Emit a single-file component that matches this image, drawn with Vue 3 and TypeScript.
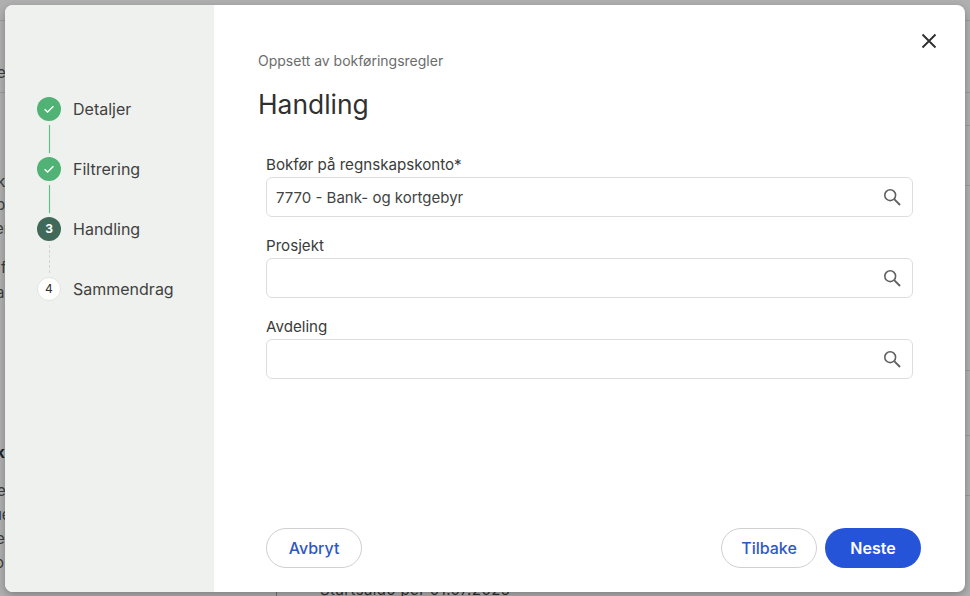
<script setup lang="ts">
interface Step {
  label: string
  state: 'done' | 'active' | 'todo'
  num: number
}
const steps: Step[] = [
  { label: 'Detaljer', state: 'done', num: 1 },
  { label: 'Filtrering', state: 'done', num: 2 },
  { label: 'Handling', state: 'active', num: 3 },
  { label: 'Sammendrag', state: 'todo', num: 4 },
]
const fields = [
  { label: 'Bokfør på regnskapskonto*', value: '7770 - Bank- og kortgebyr' },
  { label: 'Prosjekt', value: '' },
  { label: 'Avdeling', value: '' },
]
const backdropText = [
  { text: 'e', top: 64, left: -3 },
  { text: 'k', top: 173, left: -3 },
  { text: 'b', top: 196, left: -4 },
  { text: 'er', top: 220, left: -5 },
  { text: 'f', top: 259, left: 1 },
  { text: 'a', top: 284, left: -4 },
  { text: 'e', top: 482, left: -3 },
  { text: 'ue', top: 506, left: -7 },
  { text: 'es', top: 530, left: -4 },
  { text: 'o', top: 554, left: -5 },
]
const backdropLines = [
  { y: 20, left: 0 },
  { y: 92, left: 0 },
  { y: 125, left: 900 },
  { y: 185, left: 900 },
  { y: 370, left: 900 },
  { y: 435, left: 900 },
  { y: 495, left: 900 },
]
</script>

<template>
  <div class="screen">
    <div class="backdrop">
      <span v-for="(t, i) in backdropText" :key="i" class="bg-text" :style="{ top: t.top + 'px', left: t.left + 'px' }">{{ t.text }}</span>
      <span class="bg-text bg-bold">k</span>
      <span class="bg-text bg-foot">Startsaldo per 01.07.2025</span>
      <i v-for="l in backdropLines" :key="l.y" class="bg-line" :style="{ top: l.y + 'px', left: l.left + 'px' }"></i>
      <i class="bg-vline"></i>
    </div>

    <div class="modal">
      <aside class="side">
        <div v-for="(s, i) in steps" :key="s.label" class="step">
          <div class="marker">
            <span class="dot" :class="s.state">
              <svg v-if="s.state === 'done'" width="12" height="12" viewBox="0 0 12 12" fill="none">
                <path d="M1.6 6.2 4.6 9.1 10.4 3.2" stroke="#fff" stroke-width="1.4" />
              </svg>
              <template v-else>{{ s.num }}</template>
            </span>
            <span v-if="i < steps.length - 1" class="connector" :class="s.state === 'done' ? 'solid' : 'dashed'"></span>
          </div>
          <span class="step-label">{{ s.label }}</span>
        </div>
      </aside>

      <main class="main">
        <button class="close" type="button" aria-label="Lukk">
          <svg width="16" height="16" viewBox="0 0 16 16" fill="none">
            <path d="M1.5 1.5 14.5 14.5M14.5 1.5 1.5 14.5" stroke="#2f2f2f" stroke-width="1.9" />
          </svg>
        </button>
        <p class="eyebrow">Oppsett av bokføringsregler</p>
        <h1 class="title">Handling</h1>

        <div class="form">
          <div v-for="f in fields" :key="f.label" class="field">
            <label class="label">{{ f.label }}</label>
            <div class="input">
              <span class="value">{{ f.value }}</span>
              <svg width="18" height="18" viewBox="0 0 18 18" fill="none">
                <circle cx="7.2" cy="7.2" r="5.4" stroke="#5f6160" stroke-width="1.6" />
                <path d="M11.2 11.2 17 17" stroke="#5f6160" stroke-width="1.9" />
              </svg>
            </div>
          </div>
        </div>

        <div class="actions">
          <button class="btn ghost" type="button">Avbryt</button>
          <div class="actions-right">
            <button class="btn ghost" type="button">Tilbake</button>
            <button class="btn primary" type="button">Neste</button>
          </div>
        </div>
      </main>
    </div>
  </div>
</template>

<style>
html,
body {
  margin: 0;
  padding: 0;
}
</style>

<style scoped>
.screen {
  position: relative;
  width: 970px;
  height: 596px;
  overflow: hidden;
  box-sizing: border-box;
  padding: 5px;
  background: #ababab;
  font-family: Inter, "Noto Sans", sans-serif;
}
.backdrop {
  position: absolute;
  inset: 0;
  overflow: hidden;
  background: #b0b0b0;
}
.bg-text {
  position: absolute;
  font-size: 15px;
  line-height: 18px;
  color: #3a3d3d;
}
.bg-bold {
  top: 444px;
  left: -4px;
  font-weight: 700;
  color: #16252b;
}
.bg-foot {
  top: 581px;
  left: 320px;
  color: #303232;
  letter-spacing: 0.4px;
}
.bg-line {
  position: absolute;
  right: 0;
  height: 1px;
  background: #9c9c9c;
}
.bg-vline {
  position: absolute;
  left: 276px;
  top: 500px;
  bottom: 0;
  width: 1px;
  background: #777;
}
.modal {
  position: relative;
  display: flex;
  height: 587px;
  width: 960px;
  border-radius: 8px;
  overflow: hidden;
  background: #fff;
  box-shadow: 0 3px 8px rgba(0, 0, 0, 0.28);
}
.side {
  flex: 0 0 209px;
  box-sizing: border-box;
  padding: 92px 0 0 32px;
  background: #eff1ef;
}
.step {
  display: flex;
  gap: 12px;
  height: 60px;
}
.marker {
  display: flex;
  flex-direction: column;
  width: 24px;
}
.dot {
  flex: 0 0 24px;
  box-sizing: border-box;
  width: 24px;
  display: flex;
  align-items: center;
  justify-content: center;
  border-radius: 50%;
  font-size: 12px;
  line-height: 1;
}
.dot.done {
  background: #50b274;
}
.dot.active {
  background: #41695a;
  color: #fff;
  font-weight: 700;
}
.dot.todo {
  background: #fff;
  border: 1px solid #e1e3e1;
  color: #2f2f2f;
  font-weight: 400;
}
.connector {
  margin: 4px 0 0 12px;
  height: 28px;
  width: 1px;
}
.connector.solid {
  background: #58c283;
  box-shadow: 0 0 1px rgba(80, 178, 116, 0.7);
}
.connector.dashed {
  width: 0;
  border-left: 1px dashed #d3d5d3;
}
.step-label {
  font-size: 16px;
  line-height: 24px;
  color: #3f4140;
}
.main {
  position: relative;
  flex: 1;
  min-width: 0;
  display: flex;
  flex-direction: column;
  box-sizing: border-box;
  padding: 47px 44px 24px 44px;
}
.close {
  position: absolute;
  top: 28px;
  right: 28px;
  width: 16px;
  height: 16px;
  padding: 0;
  border: 0;
  background: none;
  display: flex;
}
.eyebrow {
  margin: 0;
  font-size: 14px;
  line-height: 18px;
  color: #6b6d6c;
}
.title {
  margin: 18px 0 0;
  font-size: 26.4px;
  line-height: 32px;
  font-weight: 400;
  color: #2f3130;
}
.form {
  display: flex;
  flex-direction: column;
  gap: 20px;
  margin: 36px 8px 0 8px;
}
.field {
  display: flex;
  flex-direction: column;
}
.label {
  font-size: 15.15px;
  line-height: 18px;
  height: 21px;
  color: #3a3c3b;
}
.input {
  box-sizing: border-box;
  display: flex;
  align-items: center;
  justify-content: space-between;
  height: 40px;
  padding: 0 11px 0 9px;
  border: 1px solid #dcdddc;
  border-radius: 6px;
  background: #fff;
}
.value {
  font-size: 15px;
  color: #424443;
}
.actions {
  margin: auto 0 0 8px;
  display: flex;
  justify-content: space-between;
}
.actions-right {
  display: flex;
  gap: 8px;
}
.btn {
  box-sizing: border-box;
  width: 96px;
  height: 40px;
  padding: 0;
  border-radius: 20px;
  font-family: inherit;
  font-size: 16px;
  font-weight: 500;
}
.ghost {
  background: #fff;
  border: 1px solid #cfd0cf;
  color: #2f58c4;
}
.primary {
  background: #2554d8;
  border: 0;
  color: #fff;
  font-weight: 600;
}
</style>
